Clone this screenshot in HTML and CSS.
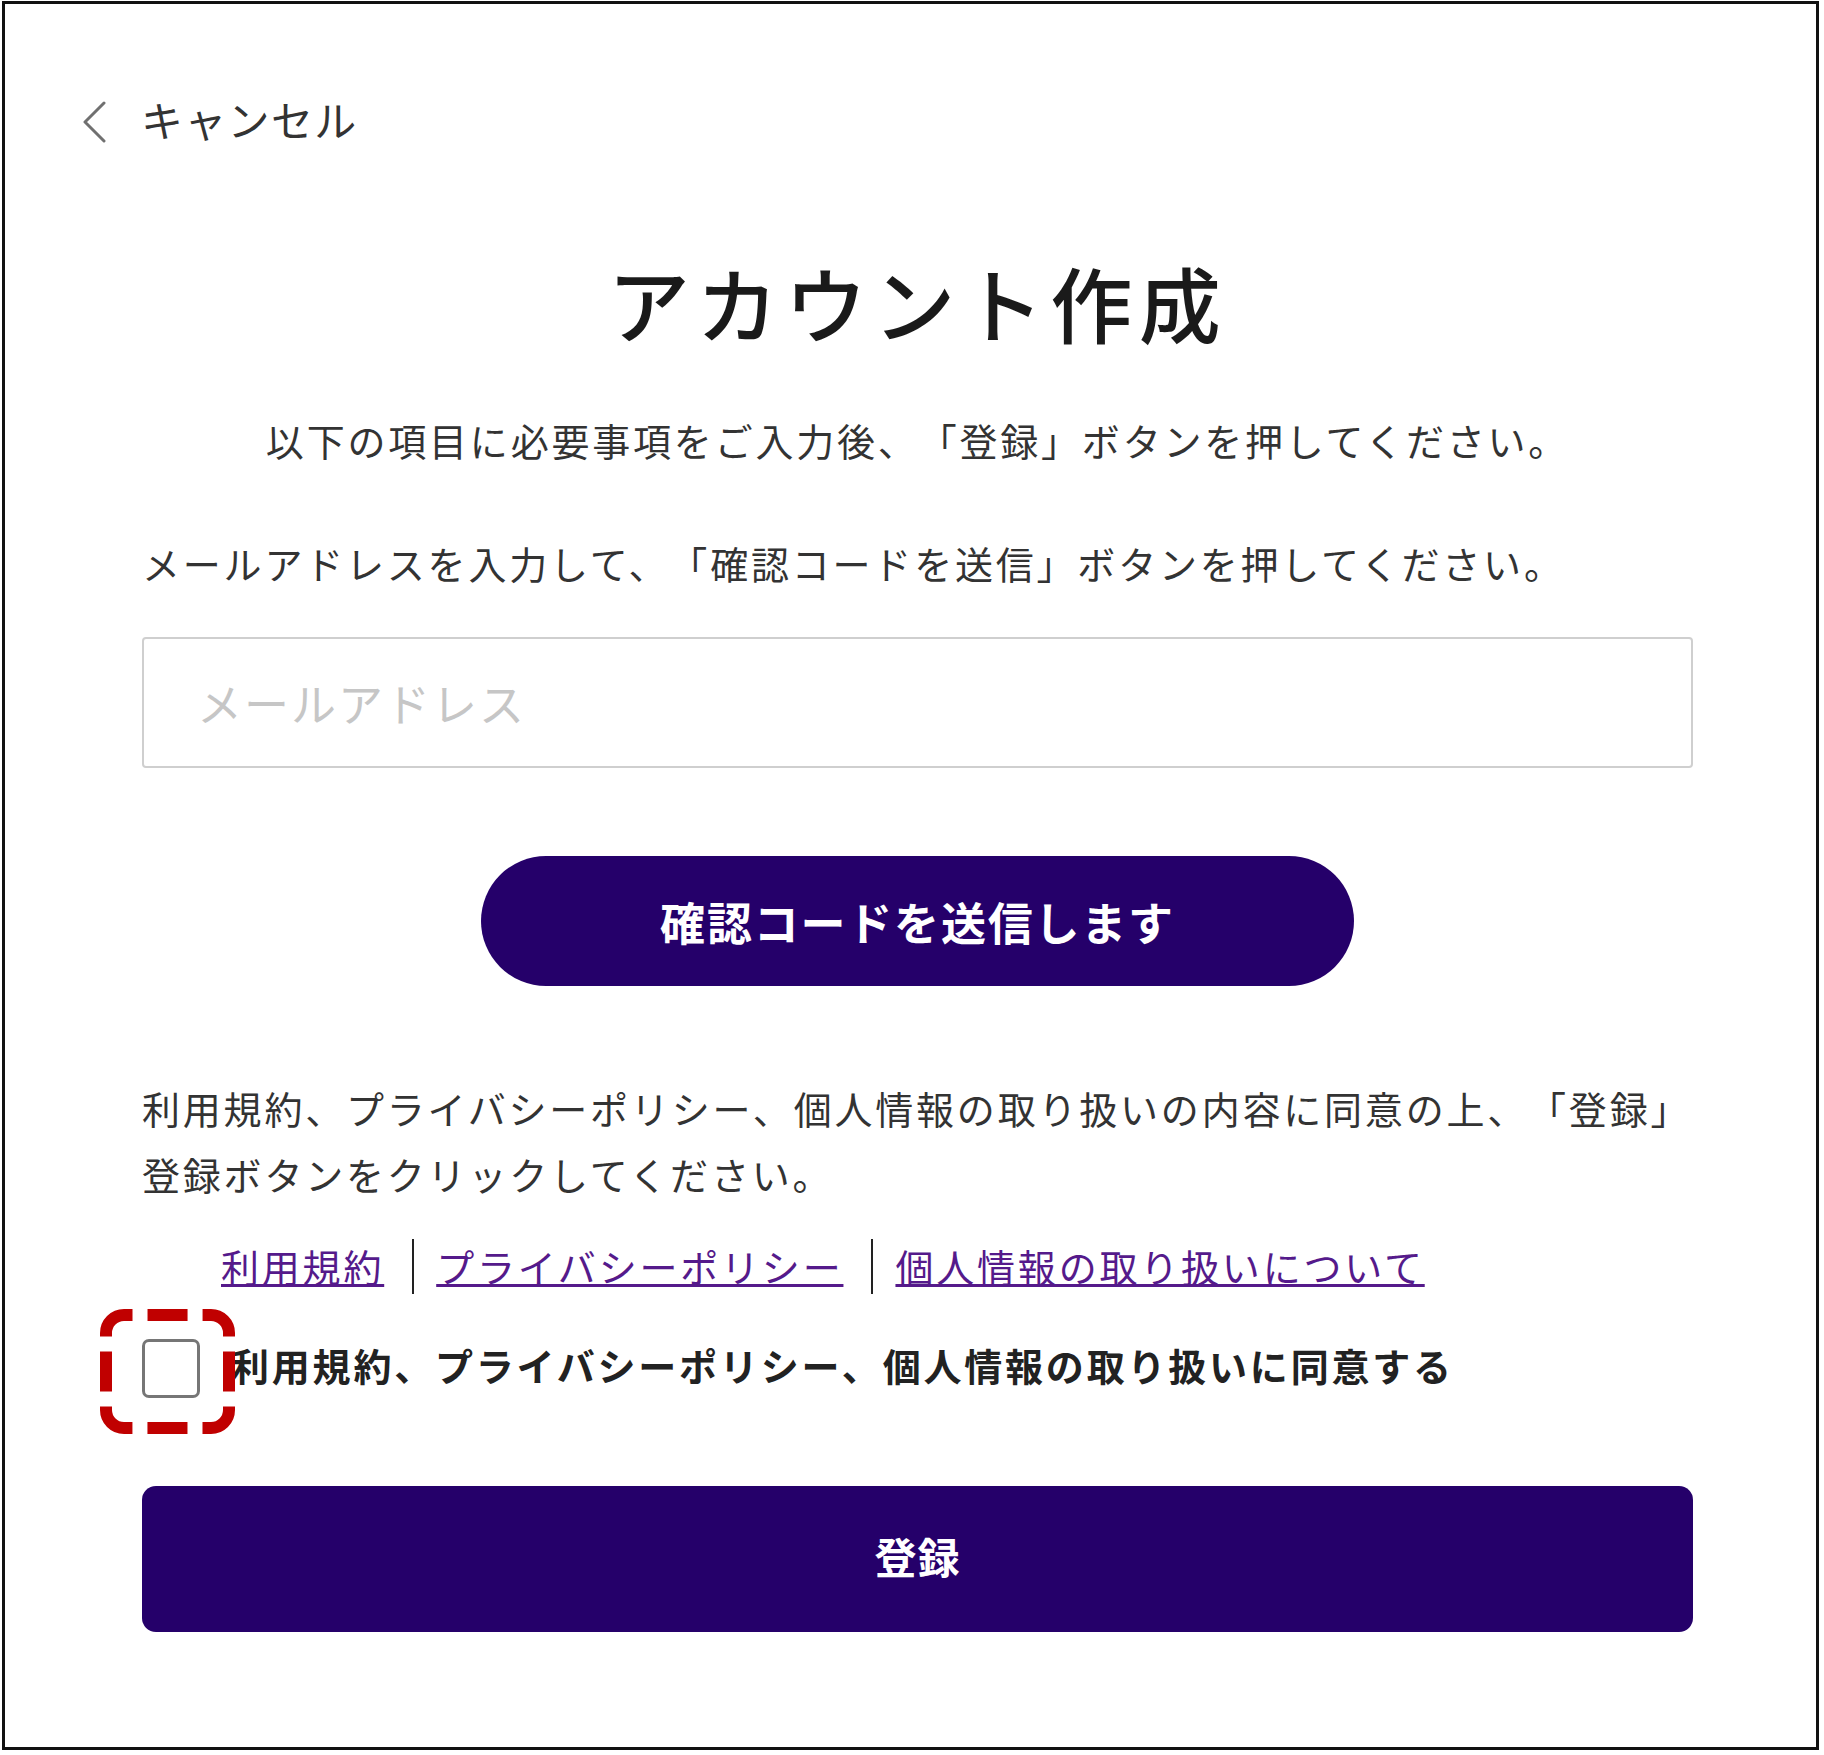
FILE: index.html
```html
<!DOCTYPE html>
<html lang="ja">
<head>
<meta charset="utf-8">
<title>アカウント作成</title>
<link rel="stylesheet" href="styles.css">
</head>
<body>
<div class="frame">
  <div class="header">
    <a class="back" href="#">
      <svg viewBox="0 0 26 42" aria-hidden="true"><path d="M22 2 L3 21 L22 40" fill="none" stroke="#707070" stroke-width="3" stroke-linecap="round" stroke-linejoin="round"/></svg>
      <span>キャンセル</span>
    </a>
  </div>
  <div class="main">
    <h1 class="title">アカウント作成</h1>
    <p class="lead">以下の項目に必要事項をご入力後、「登録」ボタンを押してください。</p>
    <p class="instruction">メールアドレスを入力して、「確認コードを送信」ボタンを押してください。</p>
    <input class="email" type="email" placeholder="メールアドレス">
    <button class="send" type="button">確認コードを送信します</button>
    <p class="terms">利用規約、プライバシーポリシー、個人情報の取り扱いの内容に同意の上、「登録」<br>登録ボタンをクリックしてください。</p>
    <div class="links">
      <a href="#">利用規約</a><span class="sep"></span><a href="#">プライバシーポリシー</a><span class="sep"></span><a href="#">個人情報の取り扱いについて</a>
    </div>
    <div class="agree">
      <input class="check" type="checkbox" id="agree">
      <label class="agree-label" for="agree">利用規約、プライバシーポリシー、個人情報の取り扱いに同意する</label>
      <svg class="highlight" viewBox="0 0 135 125" aria-hidden="true"><rect x="6" y="6" width="123" height="113" rx="18" fill="none" stroke="#c00000" stroke-width="12" pathLength="440" stroke-dasharray="40 15" stroke-dashoffset="31.5"/></svg>
    </div>
    <button class="register" type="button">登録</button>
  </div>
</div>
</body>
</html>
```

FILE: styles.css
```css
* { box-sizing: border-box; }
html, body { margin: 0; padding: 0; }
body {
  padding: 1px 5px 5px 2px;
  background: #fff;
  font-family: "Noto Sans CJK JP", "Noto Sans", sans-serif;
  color: #333;
  text-spacing-trim: space-all;
}
.frame {
  border: 3px solid #111;
  height: 1749px;
}
.header {
  margin-top: 85px;
  padding-left: 77px;
  height: 60px;
  display: flex;
  align-items: center;
}
.back {
  display: flex;
  align-items: center;
  gap: 33px;
  color: #333;
  text-decoration: none;
  font-size: 42px;
  line-height: 60px;
  letter-spacing: 1.3px;
}
.back svg {
  width: 26px;
  height: 42px;
  display: block;
  margin-top: 5px;
}
.main {
  padding: 0 123px 0 137px;
  display: flex;
  flex-direction: column;
}
.title {
  margin: 103px 0 0;
  font-size: 82px;
  line-height: 100px;
  font-weight: 500;
  letter-spacing: 6.5px;
  text-align: center;
  color: #1a1a1a;
}
.lead {
  margin: 60px 0 0;
  font-size: 38px;
  line-height: 56px;
  letter-spacing: 2.8px;
  text-align: center;
}
.instruction {
  margin: 67px 0 0;
  font-size: 38px;
  line-height: 56px;
  letter-spacing: 2.8px;
}
.email {
  margin: 46px 0 0;
  width: 100%;
  height: 131px;
  border: 2px solid #cfcfcf;
  border-radius: 4px;
  padding: 0 0 0 53px;
  font-family: inherit;
  font-size: 45px;
  letter-spacing: 2px;
  color: #333;
  background: #fff;
}
.email::placeholder { color: #c6c6c6; }
.send {
  align-self: center;
  margin-top: 88px;
  width: 873px;
  height: 130px;
  border: 0;
  border-radius: 65px;
  background: #25006a;
  color: #fff;
  font-family: inherit;
  font-size: 45px;
  font-weight: 700;
  letter-spacing: 1.8px;
}
.terms {
  margin: 89px 0 0;
  font-size: 38px;
  line-height: 66px;
  letter-spacing: 2.8px;
  white-space: nowrap;
}
.links {
  margin-top: 31px;
  padding-left: 79px;
  height: 56px;
  display: flex;
  align-items: center;
  font-size: 38px;
  line-height: 56px;
  letter-spacing: 2.8px;
}
.links a {
  color: #551a8b;
  text-decoration: underline;
}
.sep {
  width: 2px;
  height: 55px;
  background: #222;
  margin: 0 22px 0 28px;
}
.agree {
  position: relative;
  margin-top: 45px;
  height: 59px;
  display: flex;
  align-items: center;
}
.check {
  appearance: none;
  -webkit-appearance: none;
  margin: 0;
  width: 58px;
  height: 59px;
  border: 3px solid #767676;
  border-radius: 7px;
  background: #fff;
  flex: none;
}
.agree-label {
  margin: 0 0 8px 31px;
  font-size: 38px;
  line-height: 56px;
  font-weight: 700;
  letter-spacing: 2.8px;
  color: #222;
  white-space: nowrap;
}
.highlight {
  position: absolute;
  left: -42px;
  top: -30px;
  width: 135px;
  height: 125px;
}
.register {
  margin-top: 88px;
  width: 100%;
  height: 146px;
  padding: 0 0 7px;
  border: 0;
  border-radius: 14px;
  background: #25006a;
  color: #fff;
  font-family: inherit;
  font-size: 42px;
  font-weight: 700;
  letter-spacing: 1px;
}
```
